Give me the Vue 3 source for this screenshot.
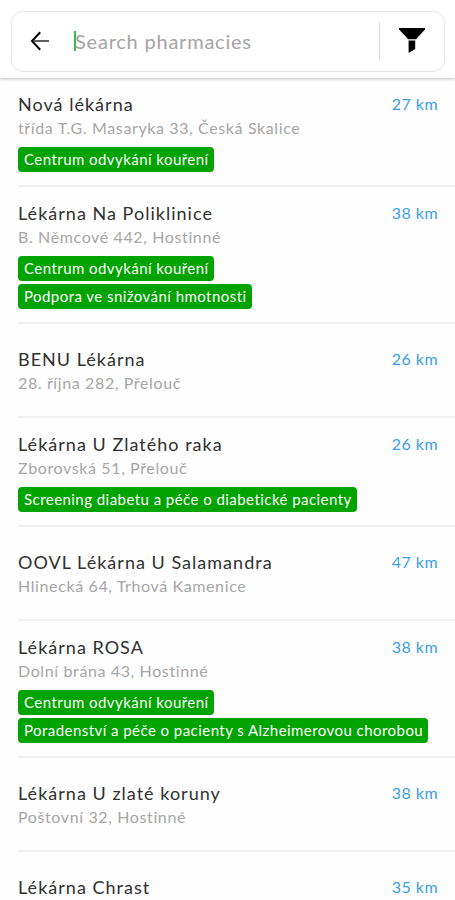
<template>
  <div class="screen">
    <header class="top-bar">
      <div class="search-box">
        <button class="btn-icon btn-back" aria-label="Back">
          <svg width="20" height="20" viewBox="0 0 20 20" fill="none">
            <path class="arrow-head" d="M10.2 1.3 2 10l8.2 8.7" />
            <path class="arrow-line" d="M3 10h16" />
          </svg>
        </button>
        <div class="search-field">
          <span class="caret"></span>
          <input v-model="query" type="text" placeholder="Search pharmacies" />
        </div>
        <button class="btn-icon btn-filter" aria-label="Filter">
          <svg width="26" height="26" viewBox="0 0 26 26">
            <path d="M0 0h26v1.6L17 11.3H9.2L0 1.6z" />
            <path d="M9.6 12.4h6.6V21l-6.6 4z" />
          </svg>
        </button>
      </div>
    </header>

    <ul class="pharmacy-list">
      <li
        v-for="p in filtered"
        :key="p.name"
        class="pharmacy"
        :class="{ plain: !p.services.length }"
      >
        <div class="pharmacy-head">
          <span class="name">{{ p.name }}</span>
          <span class="distance">{{ p.distance }} km</span>
        </div>
        <div class="address">{{ p.address }}</div>
        <div v-if="p.services.length" class="services">
          <span v-for="s in p.services" :key="s" class="service">{{ s }}</span>
        </div>
      </li>
    </ul>
  </div>
</template>

<script setup>
import { ref, computed } from 'vue'

const query = ref('')

const pharmacies = [
  {
    name: 'Nová lékárna',
    address: 'třída T.G. Masaryka 33, Česká Skalice',
    distance: 27,
    services: ['Centrum odvykání kouření'],
  },
  {
    name: 'Lékárna Na Poliklinice',
    address: 'B. Němcové 442, Hostinné',
    distance: 38,
    services: ['Centrum odvykání kouření', 'Podpora ve snižování hmotnosti'],
  },
  { name: 'BENU Lékárna', address: '28. října 282, Přelouč', distance: 26, services: [] },
  {
    name: 'Lékárna U Zlatého raka',
    address: 'Zborovská 51, Přelouč',
    distance: 26,
    services: ['Screening diabetu a péče o diabetické pacienty'],
  },
  { name: 'OOVL Lékárna U Salamandra', address: 'Hlinecká 64, Trhová Kamenice', distance: 47, services: [] },
  {
    name: 'Lékárna ROSA',
    address: 'Dolní brána 43, Hostinné',
    distance: 38,
    services: ['Centrum odvykání kouření', 'Poradenství a péče o pacienty s Alzheimerovou chorobou'],
  },
  { name: 'Lékárna U zlaté koruny', address: 'Poštovní 32, Hostinné', distance: 38, services: [] },
  { name: 'Lékárna Chrast', address: '', distance: 35, services: [] },
]

const filtered = computed(() => {
  const q = query.value.trim().toLowerCase()
  return pharmacies.filter((p) => p.name.toLowerCase().includes(q))
})
</script>

<style>
body {
  margin: 0;
  background: #fff;
}
</style>

<style scoped>
.screen {
  display: flex;
  flex-direction: column;
  height: 900px;
  overflow: hidden;
  background: #fefefe;
  font-family: Lato, 'Open Sans', sans-serif;
}

.top-bar {
  flex-shrink: 0;
  height: 78px;
  box-sizing: border-box;
  padding: 11px 10px 6px 11px;
  background: #fff;
  box-shadow: 0 1px 3px rgba(0, 0, 0, 0.25);
}

.search-box {
  display: flex;
  align-items: center;
  height: 61px;
  box-sizing: border-box;
  padding-bottom: 2px;
  border: 1px solid #e6e6e6;
  border-radius: 12px;
}

.btn-icon {
  display: flex;
  align-items: center;
  justify-content: center;
  padding: 0;
  border: none;
  background: none;
  cursor: pointer;
}

.btn-back {
  width: 56px;
}

.arrow-head {
  stroke: #000;
  stroke-width: 2;
}

.arrow-line {
  stroke: #444;
  stroke-width: 1.7;
}

.search-field {
  flex: 1;
  display: flex;
  align-items: center;
  min-width: 0;
  padding-left: 6px;
}

.caret {
  width: 2px;
  height: 20px;
  margin-right: -1px;
  background: #3fb950;
}

input {
  flex: 1;
  min-width: 0;
  padding: 0;
  border: none;
  outline: none;
  background: none;
  font-family: inherit;
  font-size: 20px;
  letter-spacing: 0.78px;
  color: #222;
}

input::placeholder {
  color: #a4a4a4;
  opacity: 1;
}

.btn-filter {
  width: 65px;
  height: 38px;
  border-left: 1px solid #dedede;
}

.pharmacy-list {
  margin: 0;
  padding: 0 0 0 18px;
  list-style: none;
}

.pharmacy {
  box-sizing: border-box;
  padding: 14px 17px 13px 0;
  border-bottom: 2px solid #f1f1f1;
}

.pharmacy.plain {
  min-height: 94px;
  padding-top: 23px;
}

.pharmacy-head {
  display: flex;
  justify-content: space-between;
  height: 24px;
  line-height: 24px;
  white-space: nowrap;
}

.name {
  font-size: 18px;
  letter-spacing: 1.02px;
  color: #303030;
}

.distance {
  font-size: 16px;
  letter-spacing: 0.45px;
  color: #3a9fe8;
}

.address {
  height: 24px;
  line-height: 24px;
  font-size: 16px;
  letter-spacing: 0.62px;
  color: #a6a6a6;
  white-space: nowrap;
}

.services {
  display: flex;
  flex-direction: column;
  align-items: flex-start;
  gap: 3px;
  padding-top: 7px;
}

.service {
  height: 25px;
  line-height: 25px;
  padding: 0 5px 0 6px;
  border-radius: 4px;
  background: #00a300;
  color: #fff;
  font-size: 15px;
  letter-spacing: 0.45px;
  white-space: nowrap;
}
</style>
